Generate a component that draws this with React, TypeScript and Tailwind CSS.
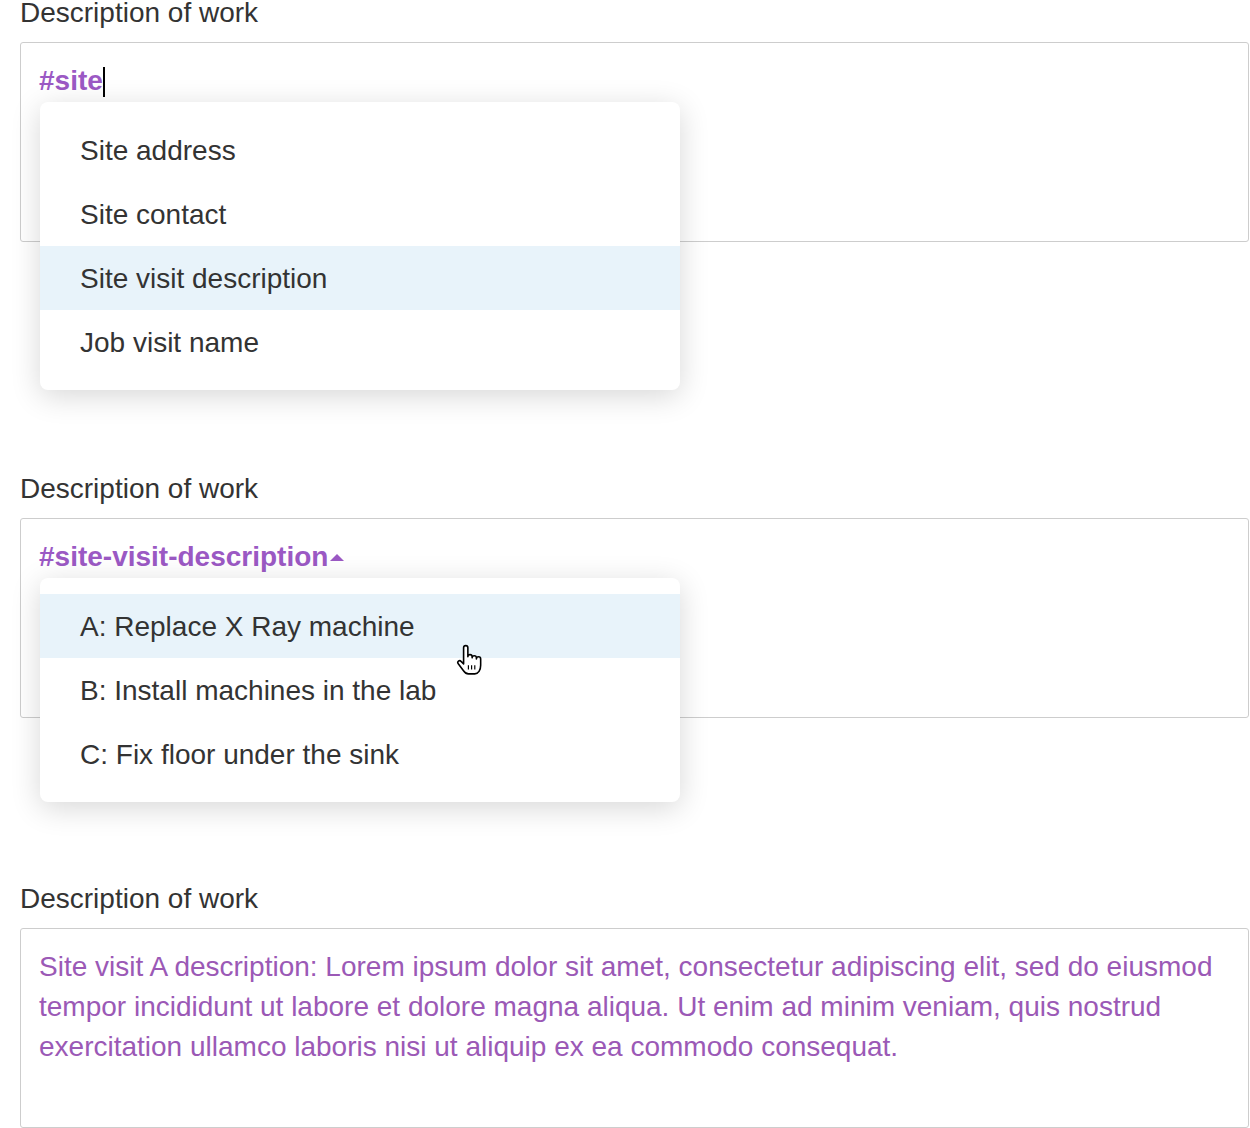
import type { ReactNode } from 'react'

const PURPLE = 'text-[#9b59c4]'

function Label({ children }: { children: ReactNode }) {
  return <div className="text-[28px] leading-[30px] text-[#333] pt-[1px] mb-[14px]">{children}</div>
}

function Field({ children }: { children: ReactNode }) {
  return (
    <div className="h-[200px] border border-[#cdcdcd] rounded-[3px] px-[18px] pt-[18px] text-[28px] leading-[40px] bg-white">
      {children}
    </div>
  )
}

function Menu({ items, active, className, children }: { items: string[]; active: number; className: string; children?: ReactNode }) {
  return (
    <div className={`relative z-10 -mt-[140px] ml-[20px] w-[640px] bg-white rounded-[8px] py-[16px] shadow-[0_6px_30px_rgba(0,0,0,0.16)] ${className}`}>
      {items.map((item, i) => (
        <div
          key={item}
          className={`h-[64px] flex items-center pl-[40px] pt-[2px] text-[28px] text-[#333] ${i === active ? 'bg-[#e8f3fa]' : ''}`}
        >
          {item}
        </div>
      ))}
      {children}
    </div>
  )
}

function HandCursor() {
  return (
    <svg width="28" height="32" viewBox="0 0 26 30" className="absolute left-[416px] top-[66px]">
      <path
        d="M7 15 V3.5 a2 2 0 0 1 4 0 V12 a2 2 0 0 1 4 0 v1 a2 2 0 0 1 4 0 v1 a2 2 0 0 1 4 0 v6 c0 4.5 -2.2 8 -5.5 8 h-6 c-2 0 -3.2 -1 -4.6 -3 L2 18.5 a1.7 1.7 0 0 1 2.6 -2.2 L7 18.6 Z"
        fill="#fff"
        stroke="#000"
        strokeWidth="1.5"
        strokeLinejoin="round"
      />
      <path d="M11.5 20 v4 M14.5 20 v4 M17.5 20 v4" stroke="#000" strokeWidth="1.1" />
    </svg>
  )
}

export default function App() {
  return (
    <div className="min-h-screen bg-white font-['Liberation_Sans',Helvetica,Arial,sans-serif] overflow-hidden">
      <div className="ml-[20px] w-[1229px] -mt-[3px]">
        <Label>Description of work</Label>
        <Field>
          <span className={`font-bold ${PURPLE}`}>#site</span>
          <span className="inline-block w-[2px] h-[30px] bg-black align-[-7px]" />
        </Field>
        <Menu
          items={['Site address', 'Site contact', 'Site visit description', 'Job visit name']}
          active={2}
          className="mb-[83px]"
        />

        <Label>Description of work</Label>
        <Field>
          <span className={`font-bold ${PURPLE}`}>#site-visit-description</span>
          <svg width="16" height="8" viewBox="0 0 16 8" className="inline-block ml-[1px] align-[5px]">
            <polygon points="1,8 8,1 15,8" fill="#9b59c4" />
          </svg>
        </Field>
        <Menu
          items={['A: Replace X Ray machine', 'B: Install machines in the lab', 'C: Fix floor under the sink']}
          active={0}
          className="mb-[81px]"
        >
          <HandCursor />
        </Menu>

        <Label>Description of work</Label>
        <Field>
          <p className="text-[#9b59b6] m-0">
            Site visit A description: Lorem ipsum dolor sit amet, consectetur adipiscing elit, sed do eiusmod
            tempor incididunt ut labore et dolore magna aliqua. Ut enim ad minim veniam, quis nostrud
            exercitation ullamco laboris nisi ut aliquip ex ea commodo consequat.
          </p>
        </Field>
      </div>
    </div>
  )
}
